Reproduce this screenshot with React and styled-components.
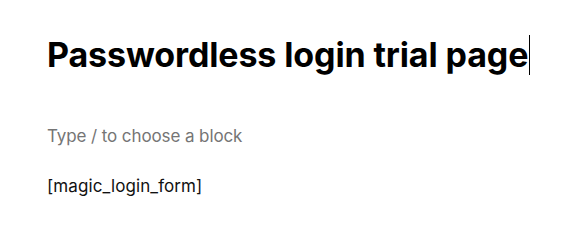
import React from "react";
import styled, { createGlobalStyle } from "styled-components";

const GlobalStyle = createGlobalStyle`
    html, body {
        margin: 0;
        padding: 0;
        background: #fff;
    }
    body {
        font-family: Inter, "Noto Sans", sans-serif;
        -webkit-font-smoothing: antialiased;
    }
`;

const Canvas = styled.main`
    width: 567px;
    height: 237px;
    box-sizing: border-box;
    padding: 32px 0 0 47px;
    display: flex;
    flex-direction: column;
    background: #fff;
`;

const Title = styled.h1`
    margin: 0;
    font-size: 34px;
    line-height: 46px;
    font-weight: 700;
    letter-spacing: -0.12px;
    color: #000;
    display: flex;
    align-items: center;
`;

const Caret = styled.span`
    display: inline-block;
    width: 1px;
    height: 40px;
    background: #000;
    margin-left: 1px;
`;

const Placeholder = styled.p`
    margin: 46px 0 0;
    font-size: 17px;
    line-height: 24px;
    letter-spacing: -0.1px;
    color: #757575;
`;

const Shortcode = styled.p`
    margin: 26px 0 0;
    font-size: 17px;
    line-height: 24px;
    letter-spacing: 0.1px;
    color: #111;
`;

export default function App() {
    return (
        <>
            <GlobalStyle />
            <Canvas>
                <Title>
                    Passwordless login trial page
                    <Caret />
                </Title>
                <Placeholder>Type / to choose a block</Placeholder>
                <Shortcode>[magic_login_form]</Shortcode>
            </Canvas>
        </>
    );
}
